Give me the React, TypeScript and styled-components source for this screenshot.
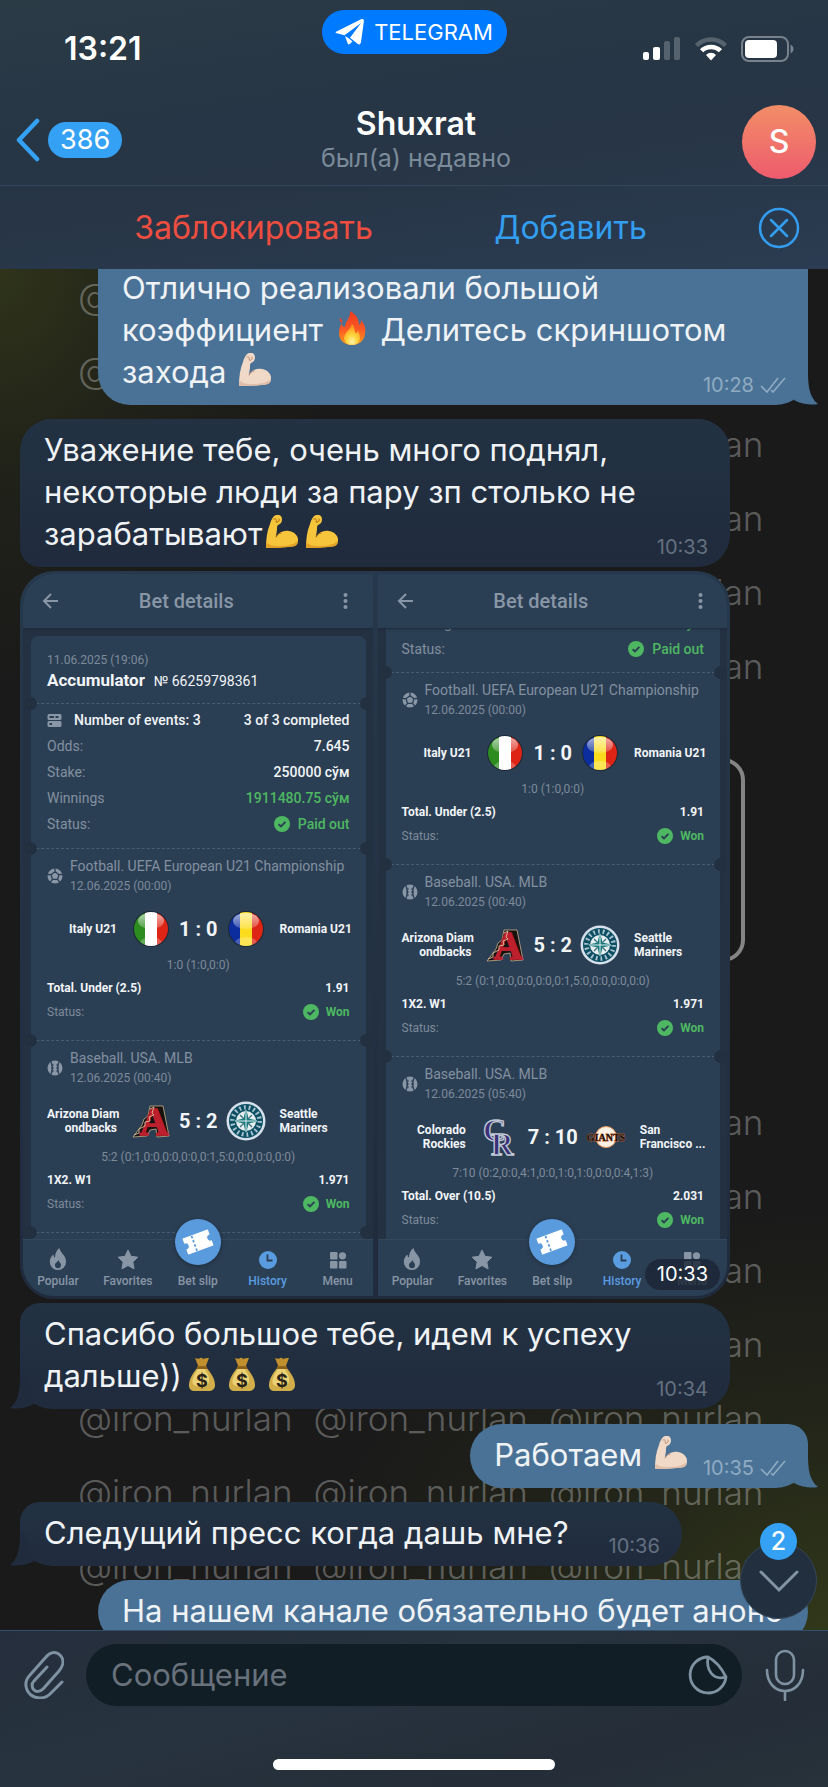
import React from "react";
import styled, { createGlobalStyle, css } from "styled-components";

const Global = createGlobalStyle`
  * { box-sizing: border-box; }
  html, body { margin: 0; padding: 0; background: #1a1a1a; }
  body { font-family: Inter, "Liberation Sans", sans-serif; color: #fff; }
  button { border: 0; padding: 0; margin: 0; background: none; color: inherit; font: inherit; cursor: pointer; }
  a { color: inherit; text-decoration: none; }
  svg { display: block; flex: none; }
`;

/* ---------- page ---------- */

const Screen = styled.div`
  display: flex;
  flex-direction: column;
  height: 100vh;
  overflow: hidden;
`;

const Header = styled.header`
  flex: none;
  background: linear-gradient(172deg, #2a3b46 0%, #273645 35%, #273546 60%, #2b3c52 100%);
`;

const StatusBar = styled.div`
  display: grid;
  grid-template-columns: 1fr auto 1fr;
  align-items: center;
  height: 98px;
  padding: 0 34px 0 64px;
`;

const Clock = styled.time`
  font-size: 32px;
  line-height: 40px;
  font-weight: 600;
`;

const ReturnPill = styled.button`
  && {
    display: flex;
    align-items: center;
    justify-content: center;
    gap: 9px;
    width: 185px;
    height: 44px;
    margin: 0 30px 34px 0;
    border-radius: 22px;
    background: #007aff;
    font-size: 22px;
    line-height: 28px;
  }
`;

const StatusIcons = styled.div`
  display: flex;
  justify-content: flex-end;
  align-items: center;
  gap: 13px;
`;

const NavBar = styled.nav`
  display: grid;
  grid-template-columns: 1fr auto 1fr;
  align-items: center;
  height: 88px;
  padding: 0 12px 0 16px;
  border-bottom: 1px solid #34475c;
`;

const Back = styled.button`
  && {
    display: flex;
    align-items: center;
    gap: 8px;
    justify-self: start;
    padding-bottom: 3px;
  }
`;

const UnreadCount = styled.span`
  padding: 0 12px;
  border-radius: 18px;
  background: #34a1f4;
  font-size: 27px;
  line-height: 36px;
`;

const Peer = styled.div`
  text-align: center;
  padding-bottom: 3px;
`;

const PeerName = styled.h1`
  margin: 0;
  font-size: 32px;
  line-height: 36px;
  font-weight: 600;
`;

const PeerStatus = styled.p`
  margin: 0;
  font-size: 25px;
  line-height: 32px;
  color: #7b8b9a;
`;

const Avatar = styled.button`
  && {
    justify-self: end;
    width: 74px;
    height: 74px;
    border-radius: 50%;
    background: linear-gradient(#f28e67, #ee5b6d);
    font-size: 32px;
    font-weight: 500;
  }
`;

const ActionBar = styled.div`
  display: flex;
  align-items: center;
  height: 83px;
  padding-left: 95px;
`;

const Action = styled.button<{ $danger?: boolean }>`
  && {
    flex: 1;
    font-size: 32px;
    line-height: 40px;
    color: ${(p) => (p.$danger ? "#ee4e40" : "#339ef0")};
  }
`;

const CloseButton = styled.button`
  && {
    display: flex;
    justify-content: center;
    width: 99px;
  }
`;

/* ---------- chat ---------- */

const Chat = styled.main`
  position: relative;
  flex: 1;
  min-height: 0;
  overflow: hidden;
  background:
    radial-gradient(ellipse 340px 420px at 0 0, #2f341a, rgba(38, 41, 24, 0.5) 50%, transparent),
    radial-gradient(ellipse 520px 420px at 100% 100%, #31381a, rgba(40, 44, 24, 0.6) 50%, transparent),
    #1a1a1a;
`;

const Wallpaper = styled.div`
  position: absolute;
  inset: -10px 0 0;
  padding: 0 60px 0 78px;
  color: rgba(255, 255, 255, 0.3);
  font-size: 35px;
  font-weight: 300;
  line-height: 74px;
`;

const WallpaperRow = styled.div`
  display: flex;
  gap: 21px;
  white-space: nowrap;
`;

const WallpaperFrame = styled.div`
  height: 204px;
  margin: 55px 23px 123px 0;
  border: 4px solid #858585;
  border-radius: 22px;
`;

const Messages = styled.div`
  position: relative;
  display: flex;
  flex-direction: column;
  padding: 0 20px;
`;

type Side = "in" | "out";

type BubbleProps = {
  $side: Side;
  $gap?: number;
  $metaGap?: number;
  $wide?: boolean;
  $radius?: string;
  $cut?: boolean;
};

const Bubble = styled.article<BubbleProps>`
  position: relative;
  display: flex;
  align-items: flex-end;
  gap: ${(p) => p.$metaGap ?? 12}px;
  flex: none;
  align-self: ${(p) => (p.$side === "out" ? "flex-end" : "flex-start")};
  width: ${(p) => (p.$wide ? "calc(100% - 78px)" : "auto")};
  margin-top: ${(p) => p.$gap ?? 0}px;
  padding: ${(p) => (p.$cut ? "0 22px 12px 24px" : "10px 22px 12px 24px")};
  border-radius: ${(p) => p.$radius ?? "32px"};
  background: ${(p) => (p.$side === "out" ? "#4a7296" : "linear-gradient(#223243, #202b3d)")};

  & > p {
    flex: ${(p) => (p.$wide ? "1 1 0" : "none")};
    min-width: 0;
    margin-top: ${(p) => (p.$cut ? "-2px" : "0")};
  }
`;

const BubbleText = styled.p`
  margin: 0;
  font-size: 31px;
  line-height: 42px;
  color: #f0f3f6;
  white-space: nowrap;
`;

const Meta = styled.span<{ $side: Side }>`
  display: flex;
  align-items: center;
  gap: 6px;
  margin-bottom: -4px;
  font-size: 20px;
  line-height: 24px;
  color: ${(p) => (p.$side === "out" ? "#8fabc2" : "#647080")};
`;

const TailBox = styled.span<{ $side: Side }>`
  position: absolute;
  bottom: 0;
  ${(p) =>
    p.$side === "out"
      ? css`right: -10px;`
      : css`left: -10px; transform: scaleX(-1);`}
`;

const Emoji = styled.span`
  display: inline-block;
  width: 34px;
  height: 34px;
  margin: 0 3px;
  vertical-align: -4px;
`;

/* ---------- photo album ---------- */

const Album = styled.article`
  position: relative;
  display: grid;
  grid-template-columns: 1fr 1fr;
  gap: 5px;
  flex: none;
  width: calc(100% - 78px);
  margin-top: 4px;
  padding: 3px;
  border-radius: 34px;
  background: linear-gradient(#26384b, #202b3d);
`;

const Photo = styled.section<{ $side: "left" | "right" }>`
  display: flex;
  flex-direction: column;
  height: 722px;
  overflow: hidden;
  border-radius: ${(p) => (p.$side === "left" ? "31px 0 0 31px" : "0 31px 31px 0")};
  background: #233142;
  font-family: Roboto, "Liberation Sans", sans-serif;
  color: #f2f5f8;
`;

const PhotoHead = styled.div`
  position: relative;
  z-index: 2;
  display: flex;
  align-items: center;
  justify-content: space-between;
  flex: none;
  height: 54px;
  padding: 0 24px 0 18px;
  background: #2b3f54;
  box-shadow: 0 1px 2px #1e2a38;
`;

const PhotoTitle = styled.h2`
  margin: 0;
  padding-right: 32px;
  font-size: 20px;
  line-height: 24px;
  font-weight: 500;
  color: #8896a6;
`;

const PhotoBody = styled.div`
  flex: 1;
  min-height: 0;
  overflow: hidden;
  padding: 0 7px 0 8px;
`;

const Ticket = styled.div<{ $scrolled?: boolean }>`
  margin-top: ${(p) => (p.$scrolled ? "-18px" : "8px")};
  border-radius: 7px;
  background: #2b3f54;
`;

const divider = css`
  border-top: 1px dashed #4a5c70;

  &::before,
  &::after {
    content: "";
    position: absolute;
    top: -7px;
    width: 13px;
    height: 13px;
    border-radius: 50%;
    background: #223040;
  }
  &::before { left: -7px; }
  &::after { right: -7px; }
`;

const TicketHead = styled.div`
  padding: 17px 16px 12px;
`;

const Summary = styled.div<{ $top?: boolean }>`
  position: relative;
  padding: ${(p) => (p.$top ? "0 16px 10px" : "3px 16px 11px")};
  ${(p) => !p.$top && divider}
`;

const TicketTail = styled.div`
  position: relative;
  height: 40px;
  ${divider}
`;

const Small = styled.span`
  font-size: 12px;
  line-height: 14px;
  font-weight: 400;
  color: #7d8a9a;
`;

const TicketDate = styled(Small)`
  display: block;
`;

const TicketName = styled.h3`
  display: flex;
  align-items: baseline;
  gap: 9px;
  margin: 3px 0 0;
  font-size: 17px;
  line-height: 20px;
  font-weight: 700;
`;

const TicketNumber = styled.span`
  font-size: 14px;
  font-weight: 400;
`;

const InfoRow = styled.div<{ $tone?: "green" }>`
  display: flex;
  align-items: center;
  justify-content: space-between;
  height: 26px;
  font-size: 14px;
  line-height: 18px;
  font-weight: 500;
  color: ${(p) => (p.$tone === "green" ? "#4db861" : "#f2f5f8")};
`;

const InfoLabel = styled.span`
  font-weight: 400;
  color: #8390a0;
`;

const InfoHead = styled.span`
  display: flex;
  align-items: center;
  gap: 12px;
`;

const InfoValue = styled.span`
  display: flex;
  align-items: center;
  gap: 8px;
`;

const EventPart = styled.div`
  position: relative;
  height: 192px;
  padding: 9px 16px 0;
  font-size: 12px;
  line-height: 14px;
  font-weight: 700;
  ${divider}
`;

const EventHead = styled.div`
  display: flex;
  align-items: center;
  gap: 7px;
`;

const League = styled.h4`
  margin: 0 0 5px;
  font-size: 14px;
  line-height: 16px;
  font-weight: 400;
  color: #8390a0;
`;

const EventDate = styled(Small)`
  display: block;
`;

const Match = styled.div`
  display: flex;
  align-items: center;
  height: 40px;
  margin-top: 16px;
`;

const Team = styled.span<{ $home?: boolean }>`
  flex: 1 1 0;
  min-width: 0;
  white-space: pre;
  text-align: ${(p) => (p.$home ? "right" : "left")};
`;

const Logo = styled.span<{ $home?: boolean }>`
  flex: none;
  width: 40px;
  height: 40px;
  margin: ${(p) => (p.$home ? "0 8px 0 14px" : "0 14px 0 8px")};
`;

const Score = styled.strong`
  font-size: 20px;
  line-height: 24px;
  font-weight: 700;
`;

const SetScore = styled(Small)`
  display: block;
  margin: 9px 0 4px;
  text-align: center;
`;

const BetRow = styled.div`
  display: flex;
  align-items: center;
  justify-content: space-between;
  height: 24px;
`;

const Won = styled.span`
  display: flex;
  align-items: center;
  gap: 7px;
  color: #4db861;
`;

const TabBar = styled.div`
  position: relative;
  display: grid;
  grid-template-columns: repeat(5, 1fr);
  grid-template-rows: 100%;
  flex: none;
  height: 57px;
  border-top: 1px solid #33485d;
  background: #2b3f54;
`;

const Tab = styled.a<{ $active?: boolean }>`
  display: flex;
  flex-direction: column;
  align-items: center;
  justify-content: flex-end;
  gap: 3px;
  padding-bottom: 7px;
  font-size: 12px;
  line-height: 16px;
  font-weight: 500;
  color: ${(p) => (p.$active ? "#5a9ce0" : "#8795a5")};
`;

const SlipDisc = styled.span`
  display: flex;
  flex: none;
  align-items: center;
  justify-content: center;
  width: 46px;
  height: 46px;
  margin-bottom: 5px;
  border-radius: 50%;
  background: #5a9bdd;
  box-shadow: 0 1px 4px #1f2c3a;
`;

const AlbumTime = styled.time`
  position: absolute;
  right: 10px;
  bottom: 9px;
  padding: 0 12px;
  border-radius: 16px;
  background: rgba(28, 38, 52, 0.8);
  font-size: 20px;
  line-height: 31px;
`;

/* ---------- overlay and composer ---------- */

const ScrollDown = styled.button`
  && {
    position: absolute;
    right: 11px;
    bottom: 11px;
    display: flex;
    align-items: center;
    justify-content: center;
    width: 77px;
    height: 77px;
    border-radius: 50%;
    border: 1px solid #34465a;
    background: #212f3e;
  }
`;

const NewBadge = styled.span`
  position: absolute;
  top: -20px;
  left: 19px;
  width: 37px;
  height: 37px;
  border-radius: 50%;
  background: #34a1f4;
  font-size: 25px;
  line-height: 37px;
  font-weight: 500;
  text-align: center;
`;

const Composer = styled.footer`
  flex: none;
  border-top: 1px solid #35506c;
  background: linear-gradient(165deg, #252e3c 0%, #27333f 40%, #242d38 75%, #27323a 100%);
`;

const ComposerRow = styled.form`
  display: flex;
  align-items: center;
  margin: 0;
  padding: 13px 0 0;
`;

const IconButton = styled.button`
  && {
    display: flex;
    flex: none;
    align-items: center;
    justify-content: center;
    width: 86px;
    height: 62px;
  }
`;

const Field = styled.div`
  display: flex;
  align-items: center;
  flex: 1;
  height: 62px;
  padding: 0 14px 0 25px;
  border-radius: 31px;
  background: #111e26;
`;

const MessageInput = styled.input`
  flex: 1;
  min-width: 0;
  padding: 0;
  border: 0;
  outline: 0;
  background: none;
  font-family: inherit;
  font-size: 31px;
  line-height: 40px;
  color: #fff;
  &::placeholder { color: #69727c; opacity: 1; }
`;

const HomeIndicator = styled.div`
  width: 282px;
  height: 11px;
  margin: 53px auto 17px;
  border-radius: 6px;
  background: #fff;
`;

/* ---------- drawings ---------- */

const Tail = ({ side }: { side: Side }) => (
  <TailBox $side={side}>
    <svg width="30" height="34" viewBox="0 0 30 34">
      <path d="M16 0h4c0 14 1 26 10 33-6 1-15 1-24-4z" fill={side === "out" ? "#4a7296" : "#202c3d"} />
    </svg>
  </TailBox>
);

const Ticks = () => (
  <svg width="26" height="16" viewBox="0 0 26 16" fill="none" stroke="currentColor" strokeWidth="1.6">
    <path d="M1 9l6 6L18 1M11 13l2 2L25 1" />
  </svg>
);

const Flame = () => (
  <Emoji role="img" aria-label="fire">
    <svg width="34" height="34" viewBox="0 0 34 34">
      <defs>
        <linearGradient id="fl" x1="0" y1="0" x2="0" y2="1">
          <stop offset="0" stopColor="#ee3a1f" /><stop offset=".55" stopColor="#fb5a24" /><stop offset="1" stopColor="#ff9d1c" />
        </linearGradient>
        <radialGradient id="fi" cx=".5" cy=".85" r=".7">
          <stop offset="0" stopColor="#fff3a8" /><stop offset=".5" stopColor="#fed43a" /><stop offset="1" stopColor="#ff9a22" />
        </radialGradient>
      </defs>
      <path d="M15 0c7 4 9 9 9 14 2-1 2-3 2-5 4 5 5 9 4 14-1 7-6 11-13 11S4 30 4 22c0-4 1-7 3-10 0 3 1 4 3 4 0-6 6-9 5-16z" fill="url(#fl)" />
      <path d="M5 7c2 1 3 3 2 5-2-1-3-3-2-5z" fill="#e6442a" />
      <path d="M17 13c-1 5-8 9-8 14 0 4 3 7 8 7s8-3 8-7c0-3-1-5-2-7-1 1-1 2-3 2 0-3-1-7-3-9z" fill="url(#fi)" />
    </svg>
  </Emoji>
);

const Biceps = ({ pale }: { pale?: boolean }) => {
  const skin = pale ? "#f1d9c8" : "#f7c53c";
  const shade = pale ? "#dcb8a2" : "#dc981f";
  const line = pale ? "#b98b72" : "#a8680c";
  return (
    <Emoji role="img" aria-label="strong">
      <svg width="34" height="34" viewBox="0 0 34 34">
        <path d="M1 33c0-9 1-17 4-24C6 5 8 1 11 0c3-1 6 1 6 4s-1 5-4 6c-1 1-1 2-1 4 0 3-1 5-1 8 3-5 8-7 13-6 6 1 9 5 9 9 0 5-3 7-10 7-8 1-15 1-22 1z" fill={skin} />
        <path d="M1 33c0-2 0-3 1-5 4 3 8 3 13 3 7 0 13-1 18-5 0 4-2 6-10 6-8 1-15 1-22 1z" fill={shade} opacity=".8" />
        <path d="M11 22c1-2 3-4 5-4M9 4c2-1 3 1 2 3 2 1 4-1 3-3" fill="none" stroke={line} strokeWidth="1" strokeLinecap="round" />
      </svg>
    </Emoji>
  );
};

const MoneyBag = () => (
  <Emoji role="img" aria-label="money bag">
    <svg width="34" height="34" viewBox="0 0 34 34">
      <path d="M10 1c2 1 3 0 4 1 2-2 3-1 4 0 2-1 3-1 6-1l-4 10h-6z" fill="#c1902f" />
      <path d="M13 10h8c5 6 9 12 9 18 0 4-3 6-6 6H10c-4 0-6-2-6-6 0-6 4-12 9-18z" fill="#d2ae4a" />
      <path d="M13 12h7c3 5 5 9 4 13-1 5-14 6-16 2s2-11 5-15z" fill="#ead173" />
      <path d="M12 9h10v3H12z" fill="#8d621d" />
      <text x="17" y="30" textAnchor="middle" fontFamily="Inter, sans-serif" fontWeight="700" fontSize="18" fill="#2a2418">$</text>
    </svg>
  </Emoji>
);

const TelegramPlane = () => (
  <svg width="30" height="38" viewBox="0 0 30 38" fill="#fff">
    <path d="M1.500 18.500L26 6.300c2-1 3.200 0 2.900 2L26 29c-.4 2.500-1.800 3-3.500 1.700l-7.500-5.900L26 10 9.500 22.300 1.800 20.300c-1.500-.5-1.600-1.100-.3-1.800zM10 23l4 2.500 3.500 3-2.700 2.600c-.9.800-1.700.5-2.100-.6z" />
  </svg>
);

const SignalIcon = () => (
  <svg width="38" height="24" viewBox="0 0 38 24">
    <rect x="0" y="15" width="6" height="8" rx="2" fill="#fff" />
    <rect x="10" y="10" width="7" height="13" rx="2" fill="#fff" />
    <rect x="21" y="4" width="6" height="19" rx="2" fill="#56636f" />
    <rect x="31" y="0" width="6" height="23" rx="2" fill="#56636f" />
  </svg>
);

const WifiIcon = () => (
  <svg width="34" height="24" viewBox="0 0 34 24" fill="none" strokeWidth="4.500">
    <path d="M2.500 8.500c8-8 21-8 29 0" stroke="#56636f" />
    <path d="M7.600 13.800c5-5.200 13.800-5.200 18.800 0" stroke="#fff" />
    <path d="M12 18c3-3 7-3 10 0l-5 5.500z" fill="#fff" />
  </svg>
);

const BatteryIcon = () => (
  <svg width="53" height="26" viewBox="0 0 53 26">
    <rect x="1" y="1" width="46" height="24" rx="7" fill="none" stroke="#77828d" strokeWidth="2" />
    <rect x="4" y="4" width="32" height="18" rx="4" fill="#fff" />
    <path d="M49.500 8.500c4 2 4 7 0 9z" fill="#77828d" />
  </svg>
);

const CheckIcon = () => (
  <svg width="16" height="16" viewBox="0 0 16 16">
    <circle cx="8" cy="8" r="8" fill="#4db861" />
    <path d="M4.600 8.200l2.400 2.300 4.400-4.600" fill="none" stroke="#2b3f54" strokeWidth="1.900" />
  </svg>
);

const ArrowIcon = () => (
  <svg width="20" height="20" viewBox="0 0 20 20" fill="none" stroke="#8896a6" strokeWidth="2">
    <path d="M17 10H3M10 3l-7 7 7 7" />
  </svg>
);

const DotsIcon = () => (
  <svg width="5" height="18" viewBox="0 0 5 18" fill="#8896a6">
    <circle cx="2.500" cy="3" r="2" /><circle cx="2.500" cy="9" r="2" /><circle cx="2.500" cy="15" r="2" />
  </svg>
);

const StackIcon = () => (
  <svg width="15" height="15" viewBox="0 0 15 15" fill="#8896a6">
    <path fillRule="evenodd" d="M2 1h11a1.500 1.500 0 011.500 1.500v3A1.500 1.500 0 0113 7H2A1.500 1.500 0 01.5 5.500v-3A1.500 1.500 0 012 1zm.5 2v2H7V3zm6 0v2h3V3z" />
    <path fillRule="evenodd" d="M2 8h11a1.500 1.500 0 011.500 1.500v3A1.500 1.500 0 0113 14H2a1.500 1.500 0 01-1.500-1.500v-3A1.500 1.500 0 012 8zm.5 2v2H5v-2z" />
  </svg>
);

const FootballIcon = () => (
  <svg width="16" height="16" viewBox="0 0 16 16">
    <circle cx="8" cy="8" r="7.500" fill="#8896a6" />
    <path d="M8 3.800l4 2.900-1.500 4.700h-5L4 6.700zM8 0v4M0 6.500l4 .2M16 6.500l-4 .2M3 14.500l2.500-3.100M13 14.500l-2.500-3.100" fill="none" stroke="#2b3f54" strokeWidth="1.300" />
  </svg>
);

const BaseballIcon = () => (
  <svg width="16" height="16" viewBox="0 0 16 16">
    <circle cx="8" cy="8" r="7.500" fill="#8896a6" />
    <path d="M3.500 1c2.500 4 2.500 10 0 14M12.500 1c-2.500 4-2.500 10 0 14" fill="none" stroke="#2b3f54" strokeWidth="1.400" />
    <path d="M4 5h3M4 8h3M4 11h3M12 5H9M12 8H9M12 11H9" stroke="#2b3f54" strokeWidth=".9" />
  </svg>
);

const FlagBall = ({ id, colors }: { id: string; colors: [string, string, string] }) => (
  <svg width="40" height="40" viewBox="0 0 40 40">
    <defs>
      <clipPath id={id}><circle cx="20" cy="20" r="17" /></clipPath>
      <linearGradient id={id + "g"} x1="0" y1="0" x2="0" y2="1">
        <stop offset="0" stopColor="#fff" stopOpacity=".85" /><stop offset="1" stopColor="#fff" stopOpacity=".25" />
      </linearGradient>
    </defs>
    <circle cx="20" cy="20" r="18" fill="#1d2936" />
    <g clipPath={`url(#${id})`}>
      <rect x="3" y="3" width="11" height="34" fill={colors[0]} />
      <rect x="14" y="3" width="12" height="34" fill={colors[1]} />
      <rect x="26" y="3" width="11" height="34" fill={colors[2]} />
      <ellipse cx="20" cy="34" rx="11" ry="6" fill="#fff" opacity=".25" />
    </g>
    <ellipse cx="20" cy="12" rx="13" ry="8" fill={`url(#${id}g)`} opacity=".75" />
  </svg>
);

const Diamondbacks = () => (
  <svg width="40" height="40" viewBox="0 0 40 40">
    <path d="M19 5h13l6 30-12 1-1-8-6 1-3 6-14 1 9-12 2-6 4-3z" fill="#16120f" stroke="#c9b08c" strokeWidth=".8" />
    <text x="23" y="34" textAnchor="middle" fontFamily="Liberation Serif, serif" fontWeight="700" fontSize="40" fill="#be1f2d" stroke="#be1f2d" strokeWidth="1.500">A</text>
    <path d="M19 8l4-2-2 6 2 2-5 2 1 4-5 1 0 4-6 3 0 4-5 2" fill="none" stroke="#d9c29c" strokeWidth=".9" />
  </svg>
);

const Mariners = () => (
  <svg width="40" height="40" viewBox="0 0 40 40">
    <circle cx="20" cy="20" r="19.500" fill="#d5e0ea" />
    <circle cx="20" cy="20" r="17" fill="#0c4f63" />
    <circle cx="20" cy="20" r="13.600" fill="none" stroke="#d5e0ea" strokeWidth="4.500" strokeDasharray="1.800 2.940" opacity=".8" />
    <circle cx="20" cy="20" r="10" fill="#e7eef0" />
    <path d="M20 7l2.500 10.500L33 20l-10.500 2.500L20 33l-2.500-10.500L7 20l10.500-2.500z" fill="#137b7d" />
    <path d="M20 9v22M9 20h22" stroke="#e7eef0" strokeWidth="1" />
    <path d="M14 14l4 4M26 14l-4 4M14 26l4-4M26 26l-4-4" stroke="#3c6f7b" strokeWidth="1.200" />
  </svg>
);

const Rockies = () => (
  <svg width="40" height="40" viewBox="0 0 40 40" fontFamily="Liberation Serif, serif" fontWeight="700" fill="#3a2f78" stroke="#c3cbd6" strokeWidth="1.300">
    <text x="3" y="24" fontSize="32">C</text>
    <text x="11" y="38" fontSize="31">R</text>
  </svg>
);

const Giants = () => (
  <svg width="40" height="40" viewBox="0 0 40 40">
    <circle cx="20" cy="20" r="10.500" fill="#fdf1e6" stroke="#e9955a" strokeWidth="1" />
    <g fontFamily="Liberation Serif, serif" fontWeight="700" fontSize="10" textAnchor="middle" paintOrder="stroke" stroke="#b9602f" strokeWidth=".8" fill="#16110e">
      <text x="20" y="24">GIANTS</text>
    </g>
  </svg>
);

const PopularIcon = () => (
  <svg width="18" height="22" viewBox="0 0 18 22" fill="currentColor">
    <path fillRule="evenodd" d="M10.500 0c.5 5 6.500 7 6.500 13.500A8 8 0 019 22a8 8 0 01-8.200-8C.8 10.500 2.500 8 4.500 6.500c0 1.500.5 2.500 1.500 3C6 6 7.500 2 10.500 0zM9.500 12c-1 2.500-3.500 2.500-3.500 5a3 3 0 006 .3c0-2.300-1.700-2.800-2.500-5.300z" />
  </svg>
);

const StarIcon = () => (
  <svg width="22" height="21" viewBox="0 0 22 21" fill="currentColor" stroke="currentColor" strokeLinejoin="round">
    <path d="M11 1l3 6.300 6.800.9-5 4.800 1.300 6.900-6.100-3.400-6.100 3.400L6.200 13l-5-4.800L8 7.300z" />
  </svg>
);

const ClockIcon = () => (
  <svg width="20" height="20" viewBox="0 0 20 20">
    <circle cx="10" cy="10" r="9" fill="currentColor" />
    <path d="M9.500 4.500v6h5" fill="none" stroke="#2b3f54" strokeWidth="1.800" />
  </svg>
);

const MenuIcon = () => (
  <svg width="20" height="20" viewBox="0 0 20 20" fill="currentColor">
    <rect x="2" y="2" width="7.500" height="7.500" rx="1" /><circle cx="14.500" cy="5.800" r="3.600" />
    <rect x="2" y="11" width="7.500" height="7.500" rx="1" /><rect x="11" y="11" width="7.500" height="7.500" rx="1" />
  </svg>
);

const SlipIcon = () => (
  <svg width="32" height="28" viewBox="0 0 32 28">
    <g transform="rotate(-20 16 14)">
      <path d="M3 6h26v4.500a3.500 3.500 0 000 7V22H3v-4.500a3.500 3.500 0 000-7z" fill="#fff" stroke="#fff" strokeLinejoin="round" />
      <path d="M12 6v16" stroke="#5a9bdd" strokeWidth="1.800" strokeDasharray="2.500 2" />
    </g>
  </svg>
);

/* ---------- bet screenshot ---------- */

type BetEvent = {
  sport: "football" | "baseball";
  league: string;
  date: string;
  home: string;
  away: string;
  homeLogo: React.ReactNode;
  awayLogo: React.ReactNode;
  score: string;
  sets: string;
  market: string;
  odds: string;
};

const italyRomania = (key: string): BetEvent => ({
  sport: "football",
  league: "Football. UEFA European U21 Championship",
  date: "12.06.2025 (00:00)",
  home: "Italy U21",
  away: "Romania U21",
  homeLogo: <FlagBall id={key + "it"} colors={["#2c8c1e", "#ffffff", "#dd2415"]} />,
  awayLogo: <FlagBall id={key + "ro"} colors={["#0b2d9e", "#fbdc1c", "#dd2415"]} />,
  score: "1 : 0",
  sets: "1:0 (1:0,0:0)",
  market: "Total. Under (2.5)",
  odds: "1.91",
});

const arizonaSeattle: BetEvent = {
  sport: "baseball",
  league: "Baseball. USA. MLB",
  date: "12.06.2025 (00:40)",
  home: "Arizona Diam\nondbacks",
  away: "Seattle\nMariners",
  homeLogo: <Diamondbacks />,
  awayLogo: <Mariners />,
  score: "5 : 2",
  sets: "5:2 (0:1,0:0,0:0,0:0,0:1,5:0,0:0,0:0,0:0)",
  market: "1X2. W1",
  odds: "1.971",
};

const coloradoSanFrancisco: BetEvent = {
  sport: "baseball",
  league: "Baseball. USA. MLB",
  date: "12.06.2025 (05:40)",
  home: "Colorado\nRockies",
  away: "San\nFrancisco ...",
  homeLogo: <Rockies />,
  awayLogo: <Giants />,
  score: "7 : 10",
  sets: "7:10 (0:2,0:0,4:1,0:0,1:0,1:0,0:0,0:4,1:3)",
  market: "Total. Over (10.5)",
  odds: "2.031",
};

const EventBlock = ({ e }: { e: BetEvent }) => (
  <EventPart>
    <EventHead>
      {e.sport === "football" ? <FootballIcon /> : <BaseballIcon />}
      <div>
        <League>{e.league}</League>
        <EventDate>{e.date}</EventDate>
      </div>
    </EventHead>
    <Match>
      <Team $home>{e.home}</Team>
      <Logo $home>{e.homeLogo}</Logo>
      <Score>{e.score}</Score>
      <Logo>{e.awayLogo}</Logo>
      <Team>{e.away}</Team>
    </Match>
    <SetScore>{e.sets}</SetScore>
    <BetRow>
      <span>{e.market}</span>
      <span>{e.odds}</span>
    </BetRow>
    <BetRow>
      <Small>Status:</Small>
      <Won><CheckIcon />Won</Won>
    </BetRow>
  </EventPart>
);

const WinningsAndStatus = () => (
  <>
    <InfoRow $tone="green"><InfoLabel>Winnings</InfoLabel><InfoValue>1911480.75 сўм</InfoValue></InfoRow>
    <InfoRow $tone="green"><InfoLabel>Status:</InfoLabel><InfoValue><CheckIcon />Paid out</InfoValue></InfoRow>
  </>
);

const BetScreen = ({ side, children }: { side: "left" | "right"; children: React.ReactNode }) => (
  <Photo $side={side}>
    <PhotoHead>
      <ArrowIcon />
      <PhotoTitle>Bet details</PhotoTitle>
      <DotsIcon />
    </PhotoHead>
    <PhotoBody>{children}</PhotoBody>
    <TabBar>
      <Tab href="#popular"><PopularIcon />Popular</Tab>
      <Tab href="#favorites"><StarIcon />Favorites</Tab>
      <Tab href="#betslip"><SlipDisc><SlipIcon /></SlipDisc>Bet slip</Tab>
      <Tab href="#history" $active><ClockIcon />History</Tab>
      <Tab href="#menu"><MenuIcon />Menu</Tab>
    </TabBar>
  </Photo>
);

const wallpaperRows = (count: number) =>
  Array.from({ length: count }, (_, i) => (
    <WallpaperRow key={i}>
      <span>@iron_nurlan</span>
      <span>@iron_nurlan</span>
      <span>@iron_nurlan</span>
    </WallpaperRow>
  ));

export default function App() {
  return (
    <Screen>
      <Global />
      <Header>
        <StatusBar>
          <Clock>13:21</Clock>
          <ReturnPill type="button"><TelegramPlane />TELEGRAM</ReturnPill>
          <StatusIcons><SignalIcon /><WifiIcon /><BatteryIcon /></StatusIcons>
        </StatusBar>
        <NavBar>
          <Back type="button" aria-label="Back, 386 unread">
            <svg width="24" height="44" viewBox="0 0 24 44" fill="none" stroke="#34a1f4" strokeWidth="4.500" strokeLinecap="round" strokeLinejoin="round">
              <path d="M21 3L3 22l18 19" />
            </svg>
            <UnreadCount>386</UnreadCount>
          </Back>
          <Peer>
            <PeerName>Shuxrat</PeerName>
            <PeerStatus>был(а) недавно</PeerStatus>
          </Peer>
          <Avatar type="button">S</Avatar>
        </NavBar>
        <ActionBar>
          <Action type="button" $danger>Заблокировать</Action>
          <Action type="button">Добавить</Action>
          <CloseButton type="button" aria-label="Close">
            <svg width="42" height="42" viewBox="0 0 42 42" fill="none" stroke="#339ef0" strokeWidth="2.500" strokeLinecap="round">
              <circle cx="21" cy="21" r="19" /><path d="M13 13l16 16M29 13L13 29" />
            </svg>
          </CloseButton>
        </ActionBar>
      </Header>

      <Chat>
        <Wallpaper aria-hidden="true">
          {wallpaperRows(6)}
          <WallpaperFrame />
          {wallpaperRows(7)}
        </Wallpaper>
        <Messages>
          <Bubble $side="out" $wide $cut $radius="0 0 32px 32px">
            <BubbleText>
              Отлично реализовали большой<br />
              коэффициент <Flame /> Делитесь скриншотом<br />
              захода <Biceps pale />
            </BubbleText>
            <Meta $side="out">10:28 <Ticks /></Meta>
            <Tail side="out" />
          </Bubble>
          <Bubble $side="in" $wide $gap={14} $radius="32px 32px 32px 20px">
            <BubbleText>
              Уважение тебе, очень много поднял,<br />
              некоторые люди за пару зп столько не<br />
              зарабатывают<Biceps /><Biceps />
            </BubbleText>
            <Meta $side="in">10:33</Meta>
          </Bubble>

          <Album>
            <BetScreen side="left">
              <Ticket>
                <TicketHead>
                  <TicketDate>11.06.2025 (19:06)</TicketDate>
                  <TicketName>Accumulator <TicketNumber>№ 66259798361</TicketNumber></TicketName>
                </TicketHead>
                <Summary>
                  <InfoRow><InfoHead><StackIcon />Number of events: 3</InfoHead><InfoValue>3 of 3 completed</InfoValue></InfoRow>
                  <InfoRow><InfoLabel>Odds:</InfoLabel><InfoValue>7.645</InfoValue></InfoRow>
                  <InfoRow><InfoLabel>Stake:</InfoLabel><InfoValue>250000 сўм</InfoValue></InfoRow>
                  <WinningsAndStatus />
                </Summary>
                <EventBlock e={italyRomania("l")} />
                <EventBlock e={arizonaSeattle} />
                <TicketTail />
              </Ticket>
            </BetScreen>
            <BetScreen side="right">
              <Ticket $scrolled>
                <Summary $top>
                  <WinningsAndStatus />
                </Summary>
                <EventBlock e={italyRomania("r")} />
                <EventBlock e={arizonaSeattle} />
                <EventBlock e={coloradoSanFrancisco} />
              </Ticket>
            </BetScreen>
            <AlbumTime>10:33</AlbumTime>
          </Album>

          <Bubble $side="in" $wide $gap={4} $radius="20px 32px 32px 32px">
            <BubbleText>
              Спасибо большое тебе, идем к успеху<br />
              дальше))<MoneyBag /><MoneyBag /><MoneyBag />
            </BubbleText>
            <Meta $side="in">10:34</Meta>
            <Tail side="in" />
          </Bubble>
          <Bubble $side="out" $gap={15} $metaGap={12} $radius="32px 20px 32px 32px">
            <BubbleText>Работаем <Biceps pale /></BubbleText>
            <Meta $side="out">10:35 <Ticks /></Meta>
            <Tail side="out" />
          </Bubble>
          <Bubble $side="in" $gap={14} $metaGap={40} $radius="20px 32px 32px 32px">
            <BubbleText>Следущий пресс когда дашь мне?</BubbleText>
            <Meta $side="in">10:36</Meta>
            <Tail side="in" />
          </Bubble>
          <Bubble $side="out" $wide $gap={14}>
            <BubbleText>На нашем канале обязательно будет анонс</BubbleText>
          </Bubble>
        </Messages>
        <ScrollDown type="button" aria-label="Scroll to latest">
          <NewBadge>2</NewBadge>
          <svg width="40" height="24" viewBox="0 0 40 24" fill="none" stroke="#8494a3" strokeWidth="3" strokeLinecap="round">
            <path d="M2 3l18 18L38 3" />
          </svg>
        </ScrollDown>
      </Chat>

      <Composer>
        <ComposerRow>
          <IconButton type="button" aria-label="Attach">
            <svg width="42" height="48" viewBox="0 0 42 48" fill="none" stroke="#7f92a2" strokeWidth="3" strokeLinecap="round" strokeLinejoin="round">
              <path d="M40 31L28 43c-5 5-14 5-19 1s-8-13-1-20L24 6c4-5 10-6 14-2s4 10-1 16L21 38c-3 3-7 3-9 1s-3-6 0-9l13-14" />
            </svg>
          </IconButton>
          <Field>
            <MessageInput type="text" placeholder="Сообщение" aria-label="Сообщение" />
            <svg width="40" height="40" viewBox="0 0 40 40" fill="none" stroke="#7f92a2" strokeWidth="2.800" strokeLinejoin="round">
              <path d="M20 2a18 18 0 1018 20C34 14 28 6 20 2zM20 2c-2 12 4 24 18 20" />
            </svg>
          </Field>
          <IconButton type="button" aria-label="Record voice message">
            <svg width="40" height="52" viewBox="0 0 40 52" fill="none" stroke="#7f92a2" strokeWidth="2.600" strokeLinecap="round">
              <rect x="11" y="2" width="18" height="33" rx="9" /><path d="M2 21c0 28 36 28 36 0M20 43v8" />
            </svg>
          </IconButton>
        </ComposerRow>
        <HomeIndicator />
      </Composer>
    </Screen>
  );
}
